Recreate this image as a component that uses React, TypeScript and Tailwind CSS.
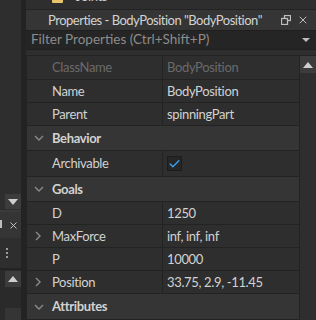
import { Check, X } from 'lucide-react'

type Row =
  | { kind: 'prop'; name: string; value?: string; h: string; disabled?: boolean; expand?: boolean; check?: boolean }
  | { kind: 'group'; name: string; h: string }

const rows: Row[] = [
  { kind: 'prop', name: 'ClassName', value: 'BodyPosition', h: 'h-[24px]', disabled: true },
  { kind: 'prop', name: 'Name', value: 'BodyPosition', h: 'h-[23px]' },
  { kind: 'prop', name: 'Parent', value: 'spinningPart', h: 'h-[23px]' },
  { kind: 'group', name: 'Behavior', h: 'h-[25px]' },
  { kind: 'prop', name: 'Archivable', h: 'h-[26px]', check: true },
  { kind: 'group', name: 'Goals', h: 'h-[25px]' },
  { kind: 'prop', name: 'D', value: '1250', h: 'h-[23px]' },
  { kind: 'prop', name: 'MaxForce', value: 'inf, inf, inf', h: 'h-[23px]', expand: true },
  { kind: 'prop', name: 'P', value: '10000', h: 'h-[23px]' },
  { kind: 'prop', name: 'Position', value: '33.75, 2.9, -11.45', h: 'h-[23px]', expand: true },
  { kind: 'group', name: 'Attributes', h: 'h-[26px]' }
]

function Arrow({ up }: { up?: boolean }) {
  return (
    <svg width="10" height="6" viewBox="0 0 10 6">
      <path d={up ? 'M0 6 L5 0 L10 6 Z' : 'M0 0 L5 6 L10 0 Z'} fill="#cfcfcf" />
    </svg>
  )
}

function Chevron({ open }: { open?: boolean }) {
  return open ? (
    <svg width="10" height="6" viewBox="0 0 10 6" fill="none" stroke="#8a8a8a" strokeWidth="1.4">
      <path d="M1 1 L5 5 L9 1" />
    </svg>
  ) : (
    <svg width="6" height="10" viewBox="0 0 6 10" fill="none" stroke="#8a8a8a" strokeWidth="1.4">
      <path d="M1 1 L5 5 L1 9" />
    </svg>
  )
}

function LeftStrip() {
  return (
    <div className="flex h-full w-[26px] shrink-0">
      <div className="flex w-[21px] flex-col">
        <div className="flex h-[210px] flex-col justify-end bg-[#2e2e2e] pb-[1px] pl-[5px]">
          <div className="flex h-[15px] w-[16px] items-center justify-center bg-[#3c3c3c]">
            <Arrow />
          </div>
        </div>
        <div className="h-[2px] bg-[#3a3a3a]" />
        <div className="relative flex h-[26px] items-center bg-[#353535]">
          <div className="absolute left-0 top-[8px] h-[8px] w-[2px] bg-[#bdbdbd]" />
          <X size={11} strokeWidth={2} color="#cfcfcf" className="ml-[8px]" />
        </div>
        <div className="flex h-[30px] items-center bg-[#2e2e2e] pl-[6px]">
          <div className="flex flex-col gap-[2px]">
            <div className="h-[2px] w-[2px] bg-[#9a9a9a]" />
            <div className="h-[2px] w-[2px] bg-[#9a9a9a]" />
            <div className="h-[2px] w-[2px] bg-[#9a9a9a]" />
          </div>
        </div>
        <div className="h-[2px] bg-[#232323]" />
        <div className="flex flex-1 flex-col bg-[#2a2a2a] pl-[5px] pt-[1px]">
          <div className="flex h-[16px] w-[16px] items-center justify-center bg-[#3c3c3c]">
            <Arrow up />
          </div>
          <div className="h-[21px]" />
          <div className="flex-1 bg-[#353535]" />
        </div>
      </div>
      <div className="h-full w-[5px] bg-[#232323]" />
    </div>
  )
}

function PropRow({ row }: { row: Row }) {
  if (row.kind === 'group') {
    return (
      <div className={`flex ${row.h} items-center border-b border-[#232323] bg-[#353535]`}>
        <div className="ml-[7px] flex w-[12px] items-center">
          <Chevron open />
        </div>
        <span className="ml-[6px] font-bold text-[#d2d2d2]">{row.name}</span>
      </div>
    )
  }
  const txt = row.disabled ? 'text-[#6a6a6a]' : 'text-[#d2d2d2]'
  return (
    <div className={`flex ${row.h} items-stretch border-b border-[#232323] bg-[#2e2e2e]`}>
      <div className="flex w-[136px] items-center border-r border-[#232323]">
        <div className="ml-[8px] flex w-[11px] items-center">{row.expand && <Chevron />}</div>
        <span className={`ml-[6px] ${txt}`}>{row.name}</span>
      </div>
      <div className="flex flex-1 items-center pl-[4px]">
        {row.check ? (
          <div className="flex h-[15px] w-[15px] items-center justify-center border border-[#1c1c1c] bg-[#262626]">
            <Check size={14} strokeWidth={2.4} color="#3ba3f2" />
          </div>
        ) : (
          <span className={txt}>{row.value}</span>
        )}
      </div>
    </div>
  )
}

export default function App() {
  return (
    <div
      className="flex h-[320px] w-[316px] overflow-hidden whitespace-nowrap bg-[#2e2e2e] text-[13px] leading-none tracking-[-0.35px]"
      style={{ fontFamily: 'Lato, "Open Sans", sans-serif' }}
    >
      <LeftStrip />
      <div className="flex min-w-0 flex-1 flex-col">
        <div className="relative h-[10px] border-b border-[#232323] bg-[#2e2e2e]">
          <div className="absolute left-[26px] top-[-6px] h-[9px] w-[11px] rounded-[1px] bg-[#e8c46a]" />
          <span className="absolute left-[50px] top-[-10px] text-[#cfcfcf]">Joints</span>
        </div>
        <div className="flex h-[20px] items-center bg-[#353535]">
          <span className="ml-[22px] tracking-[-0.5px] text-[#d2d2d2]">Properties - BodyPosition "BodyPosition"</span>
          <div className="ml-auto mr-[7px] flex items-center gap-[6px]">
            <svg width="10" height="10" viewBox="0 0 10 10" fill="none" stroke="#bdbdbd" strokeWidth="1.3">
              <rect x="3.5" y="0.5" width="6" height="5" />
              <rect x="0.5" y="3.5" width="6" height="6" fill="#353535" />
            </svg>
            <X size={12} strokeWidth={2} color="#bdbdbd" />
          </div>
        </div>
        <div className="flex h-[20px] items-center border-y border-[#1f1f1f] bg-[#252525]">
          <span className="ml-[5px] text-[13.5px] tracking-normal text-[#8c8c8c]">Filter Properties (Ctrl+Shift+P)</span>
          <svg className="ml-auto mr-[6px]" width="8" height="4" viewBox="0 0 8 4">
            <path d="M0 0 L4 4 L8 0 Z" fill="#bdbdbd" />
          </svg>
        </div>
        <div className="h-[6px] border-b border-[#232323] bg-[#2e2e2e]" />
        <div className="flex flex-1">
          <div className="flex flex-1 flex-col border-l border-[#232323]">
            {rows.map((r) => (
              <PropRow key={r.name} row={r} />
            ))}
          </div>
          <div className="flex w-[17px] flex-col border-l border-[#232323] bg-[#2e2e2e]">
            <div className="flex h-[17px] items-center justify-center bg-[#3c3c3c]">
              <Arrow up />
            </div>
          </div>
        </div>
      </div>
    </div>
  )
}
